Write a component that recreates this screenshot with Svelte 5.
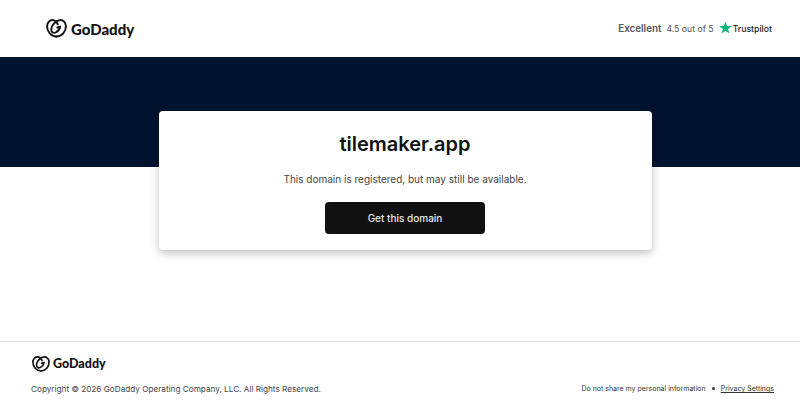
<script>
  const rating = "4.5 out of 5";
</script>

{#snippet heart(size)}
  <svg class="heart" width={size} height={size * 0.88} viewBox="0 0 25 22" fill="none" stroke="#111" stroke-width="2.3" stroke-linecap="round" stroke-linejoin="round">
    <path d="M12.5 20.800C6 20.800 1.300 15 1.300 8.500 1.300 3.500 5 1 8.500 1.300c2.500.3 4.500 2.500 5.500 5" />
    <path d="M12.500 20.800c6.500 0 11.200-5.800 11.200-12.300 0-5-3.700-7.500-7.200-7.200C11 1.800 6.200 8 6.200 12.500c0 3.500 2.800 5 5.800 3.300 2.700-1.500 4.300-3.800 4.800-6.800l-3.300 1.100" />
  </svg>
{/snippet}

<div class="page">
  <header class="top">
    <div class="brand">
      {@render heart(21)}
      <span class="word">GoDaddy</span>
    </div>
    <div class="trust">
      <span class="excellent">Excellent</span>
      <span class="score">{rating}</span>
      <span class="pilot">
        <svg width="13" height="13" viewBox="0 0 24 24"><path fill="#00b67a" d="M12 1l2.800 8.400H24l-7.400 5.300 2.800 8.600L12 18l-7.400 5.300 2.800-8.600L0 9.400h9.200z" /></svg>
        Trustpilot
      </span>
    </div>
  </header>

  <div class="band"></div>

  <main class="card">
    <h1>tilemaker.app</h1>
    <p>This domain is registered, but may still be available.</p>
    <button type="button">Get this domain</button>
  </main>

  <footer>
    <div class="brand small">
      {@render heart(18)}
      <span class="word">GoDaddy</span>
    </div>
    <div class="legal">
      <span class="copy">Copyright © 2026 GoDaddy Operating Company, LLC. All Rights Reserved.</span>
      <span class="links">
        <span>Do not share my personal information</span>
        <span class="dot"></span>
        <u>Privacy Settings</u>
      </span>
    </div>
  </footer>
</div>

<style>
  :global(body) {
    background: #fff;
    font-family: Inter, "Liberation Sans", sans-serif;
  }

  .page {
    height: 400px;
    display: flex;
    flex-direction: column;
    overflow: hidden;
  }

  .top {
    height: 57px;
    padding: 0 28px 0 46px;
    display: flex;
    align-items: center;
    justify-content: space-between;
  }

  .brand {
    display: flex;
    align-items: center;
    gap: 4px;
    color: #111;
  }

  .word {
    font-family: Lato, sans-serif;
    font-size: 15px;
    font-weight: 900;
  }

  .trust {
    display: flex;
    align-items: center;
    color: #555;
    font-size: 8.7px;
  }

  .excellent {
    font-size: 9.8px;
    font-weight: 600;
    margin-right: 5px;
  }

  .score {
    margin-right: 5px;
  }

  .pilot {
    display: flex;
    align-items: center;
    gap: 1px;
    color: #191919;
    font-weight: 500;
  }

  .pilot svg {
    margin-top: -3px;
  }

  .band {
    height: 110px;
    flex: none;
    background: #00132e;
  }

  .card {
    box-sizing: border-box;
    flex: none;
    width: 493px;
    height: 139px;
    margin: -56px 0 0 159px;
    padding: 21px 1px 0 0;
    background: #fff;
    border-radius: 4px;
    box-shadow: 0 3px 8px rgba(0, 0, 0, 0.25);
    display: flex;
    flex-direction: column;
    align-items: center;
  }

  h1 {
    margin: 0;
    font-size: 20px;
    line-height: 24px;
    font-weight: 600;
    color: #111;
  }

  p {
    margin: 16px 0 0;
    font-size: 10px;
    line-height: 14px;
    color: #444;
  }

  button {
    margin-top: 16px;
    width: 160px;
    height: 32px;
    border: none;
    border-radius: 4px;
    background: #111;
    color: #e8e8e8;
    font: 500 10px Inter, sans-serif;
  }

  footer {
    margin-top: auto;
    height: 59px;
    box-sizing: border-box;
    border-top: 1px solid #e4e4e4;
    padding: 14px 26px 0 32px;
  }

  .small {
    gap: 3px;
  }

  .small .word {
    font-size: 12.5px;
  }

  .legal {
    margin-top: 12px;
    margin-left: -1px;
    display: flex;
    align-items: center;
    justify-content: space-between;
    color: #444;
  }

  .copy {
    font-size: 8.2px;
  }

  .links {
    display: flex;
    align-items: center;
    gap: 6px;
    font-size: 7px;
    color: #333;
  }

  .dot {
    width: 3px;
    height: 3px;
    border-radius: 50%;
    background: #333;
  }
</style>
